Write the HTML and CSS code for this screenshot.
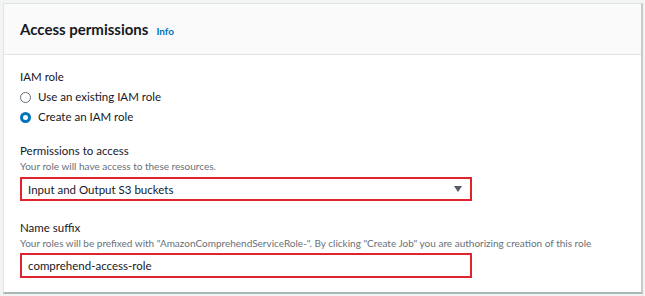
FILE: index.html
```html
<!DOCTYPE html>
<html lang="en">
<head>
  <meta charset="UTF-8" />
  <title>Access permissions</title>
  <link rel="stylesheet" href="styles.css">
</head>
<body>
  <div class="panel">
    <div class="panel-header">
      <h2>Access permissions</h2>
      <a class="info" href="#">Info</a>
    </div>
    <div class="panel-body">
      <div class="field">
        <div class="label">IAM role</div>
        <label class="radio first"><span class="dot"></span> Use an existing IAM role</label>
        <label class="radio"><span class="dot checked"></span> Create an IAM role</label>
      </div>
      <div class="field perm">
        <div class="label">Permissions to access</div>
        <div class="hint">Your role will have access to these resources.</div>
        <div class="box select">
          <span>Input and Output S3 buckets</span>
          <span class="caret"></span>
        </div>
      </div>
      <div class="field">
        <div class="label">Name suffix</div>
        <div class="hint">Your roles will be prefixed with "AmazonComprehendServiceRole-". By clicking "Create Job" you are authorizing creation of this role</div>
        <div class="box name">comprehend-access-role</div>
      </div>
    </div>
  </div>
</body>
</html>
```

FILE: styles.css
```css
body {
  margin: 0;
  padding: 3px 2px 2px 3px;
  background-color: #f2f3f3;
  font-family: Lato, Arial, sans-serif;
  color: #16191f;
}
.panel {
  background: white;
  border: 1px solid #e1e4e4;
  border-right: 2px solid #c3cbcb;
  border-bottom: 2px solid #aab7b8;
  height: 291px;
  box-sizing: border-box;
}
.panel-header {
  background: #fafafa;
  border-bottom: 1px solid #e1e4e4;
  height: 51px;
  box-sizing: border-box;
  padding: 0 16px;
  display: flex;
  align-items: center;
  gap: 8px;
}
h2 {
  margin: 0;
  font-size: 15px;
  font-weight: 700;
}
.info {
  color: #0073bb;
  font-size: 10px;
  font-weight: 700;
  text-decoration: none;
  margin-top: 3px;
}
.panel-body {
  padding: 14px 16px 0;
}
.field {
  margin-bottom: 16px;
}
.field.perm {
  margin-bottom: 19px;
}
.label {
  font-size: 11.5px;
  line-height: 16px;
}
.hint {
  font-size: 10px;
  color: #687078;
  line-height: 14px;
  white-space: nowrap;
}
.radio {
  display: flex;
  align-items: center;
  gap: 7px;
  font-size: 11.5px;
  line-height: 20px;
}
.radio.first {
  margin-top: 2px;
}
.dot {
  width: 11px;
  height: 11px;
  border: 1px solid #687078;
  border-radius: 50%;
  box-sizing: border-box;
}
.dot.checked {
  border: 3.5px solid #0073bb;
}
.box {
  width: 452px;
  height: 24px;
  box-sizing: border-box;
  border: 2px solid #e0232e;
  margin-top: 4px;
  padding: 0 6px;
  font-size: 11.5px;
  display: flex;
  align-items: center;
  justify-content: space-between;
}
.box.name {
  height: 25px;
  margin-top: 3px;
}
.caret {
  width: 0;
  height: 0;
  border-left: 4px solid transparent;
  border-right: 4px solid transparent;
  border-top: 6px solid #545b64;
  margin-right: 2px;
}
```
